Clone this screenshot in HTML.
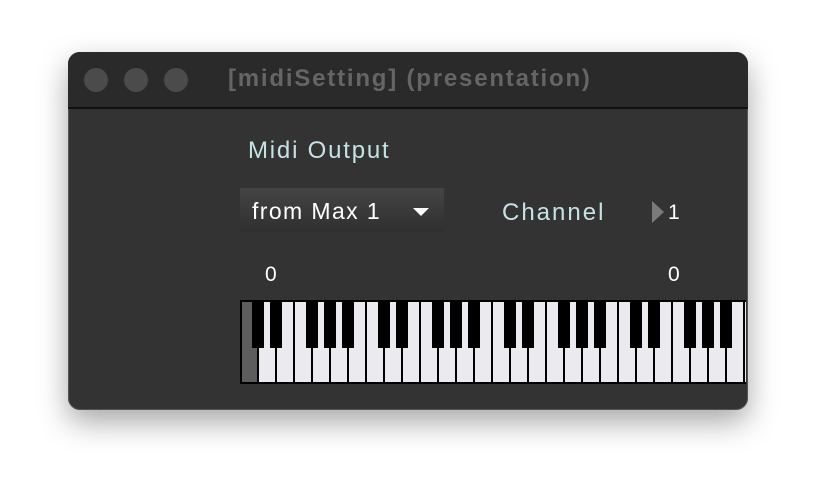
<!DOCTYPE html>
<html><head><meta charset="utf-8"><style>
html,body{margin:0;padding:0;width:816px;height:494px;background:#fff;overflow:hidden;font-family:"Liberation Sans",Arial,sans-serif}
.win{position:absolute;left:68px;top:52px;width:680px;height:358px;border-radius:12px;background:#333;box-shadow:0 12px 30px rgba(0,0,0,.35),0 0 0 1px #555 inset;overflow:hidden}
.tb{position:absolute;left:0;top:0;width:680px;height:55px;background:#2a2a2a;border-bottom:2px solid #111}
.dot{position:absolute;top:16px;width:24px;height:24px;border-radius:50%;background:#4b4b4b}
.title{position:absolute;left:160px;top:13px;color:#656565;font-weight:bold;font-size:24px;letter-spacing:1.8px;white-space:nowrap}
.t{position:absolute;white-space:nowrap}
</style></head><body>
<div class="win">
 <div class="tb">
  <div class="dot" style="left:16px"></div><div class="dot" style="left:56px"></div><div class="dot" style="left:96px"></div>
  <div class="title">[midiSetting] (presentation)</div>
 </div>
 <div class="t" style="left:180px;top:85px;font-size:24px;letter-spacing:1.8px;color:#c5e3e6">Midi Output</div>
 <div style="position:absolute;left:172px;top:136px;width:204px;height:44px;background:linear-gradient(#444,#383838 60%,#2f2f2f)"></div>
 <div class="t" style="left:184px;top:146px;font-size:23px;letter-spacing:1.4px;color:#fff">from Max 1</div>
 <div style="position:absolute;left:345px;top:156px;width:0;height:0;border-left:8px solid transparent;border-right:8px solid transparent;border-top:8px solid #fff"></div>
 <div class="t" style="left:434px;top:147px;font-size:24px;letter-spacing:2px;color:#c5e3e6">Channel</div>
 <div style="position:absolute;left:584px;top:149px;width:0;height:0;border-top:11px solid transparent;border-bottom:11px solid transparent;border-left:12px solid #7a7a7a"></div>
 <div class="t" style="left:600px;top:149px;font-size:21px;color:#fff">1</div>
 <div class="t" style="left:197px;top:211px;font-size:21px;color:#fff">0</div>
 <div class="t" style="left:600px;top:211px;font-size:21px;color:#fff">0</div>
</div>
<svg width="816" height="494" style="position:absolute;left:0;top:0">
 <defs><clipPath id="c"><rect x="240" y="300" width="506" height="84"/></clipPath></defs>
 <g clip-path="url(#c)">
 <rect x="240" y="300" width="510" height="84" fill="#000"/>
 <rect x="242" y="302" width="15" height="80" fill="#5d5d5d"/>
 <g fill="#ebeaef">
 <rect x="259" y="302" width="16" height="80"/><rect x="277" y="302" width="16" height="80"/><rect x="295" y="302" width="16" height="80"/><rect x="313" y="302" width="16" height="80"/><rect x="331" y="302" width="16" height="80"/><rect x="349" y="302" width="16" height="80"/><rect x="367" y="302" width="16" height="80"/><rect x="385" y="302" width="16" height="80"/><rect x="403" y="302" width="16" height="80"/><rect x="421" y="302" width="16" height="80"/><rect x="439" y="302" width="16" height="80"/><rect x="457" y="302" width="16" height="80"/><rect x="475" y="302" width="16" height="80"/><rect x="493" y="302" width="16" height="80"/><rect x="511" y="302" width="16" height="80"/><rect x="529" y="302" width="16" height="80"/><rect x="547" y="302" width="16" height="80"/><rect x="565" y="302" width="16" height="80"/><rect x="583" y="302" width="16" height="80"/><rect x="601" y="302" width="16" height="80"/><rect x="619" y="302" width="16" height="80"/><rect x="637" y="302" width="16" height="80"/><rect x="655" y="302" width="16" height="80"/><rect x="673" y="302" width="16" height="80"/><rect x="691" y="302" width="16" height="80"/><rect x="709" y="302" width="16" height="80"/><rect x="727" y="302" width="16" height="80"/><rect x="745" y="302" width="16" height="80"/>
 </g>
 <g fill="#000">
 <rect x="252" y="300" width="12" height="48"/><rect x="270" y="300" width="12" height="48"/><rect x="306" y="300" width="12" height="48"/><rect x="324" y="300" width="12" height="48"/><rect x="342" y="300" width="12" height="48"/>
 <rect x="378" y="300" width="12" height="48"/><rect x="396" y="300" width="12" height="48"/><rect x="432" y="300" width="12" height="48"/><rect x="450" y="300" width="12" height="48"/><rect x="468" y="300" width="12" height="48"/>
 <rect x="504" y="300" width="12" height="48"/><rect x="522" y="300" width="12" height="48"/><rect x="558" y="300" width="12" height="48"/><rect x="576" y="300" width="12" height="48"/><rect x="594" y="300" width="12" height="48"/>
 <rect x="630" y="300" width="12" height="48"/><rect x="648" y="300" width="12" height="48"/><rect x="684" y="300" width="12" height="48"/><rect x="702" y="300" width="12" height="48"/><rect x="720" y="300" width="12" height="48"/>
 </g>
 </g>
</svg>
</body></html>
